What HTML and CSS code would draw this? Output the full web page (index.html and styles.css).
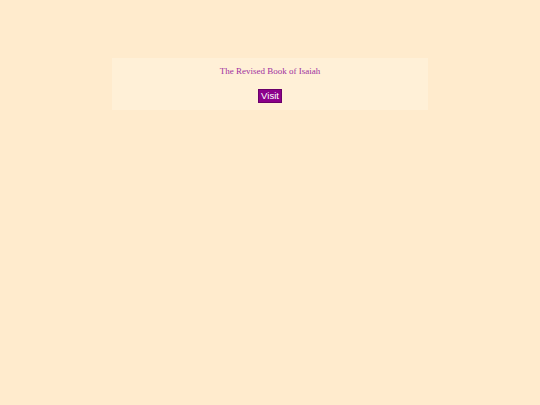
FILE: index.html
```html
<!DOCTYPE html>
<html>
<head>
<meta charset="utf-8">
<link rel="stylesheet" href="styles.css">
</head>
<body>
<div class="card">
  <p class="title">The Revised Book of Isaiah</p>
  <button class="visit">Visit</button>
</div>
</body>
</html>
```
FILE: styles.css
```css
html, body {
  margin: 0;
  padding: 0;
  background: #FFEBCD;
  height: 100%;
}
body {
  padding-top: 58px;
  box-sizing: border-box;
}
.card {
  width: 316px;
  margin: 0 auto;
  background: #FFF0D7;
  padding-top: 7px;
  height: 52px;
  box-sizing: border-box;
  text-align: center;
  font-family: "Liberation Serif", serif;
}
.title {
  margin: 0;
  color: #A0309F;
  font-size: 9px;
  line-height: 12px;
}
.visit {
  display: block;
  width: 24px;
  margin: 12px auto 0;
  background: #8B008B;
  color: #fff;
  border: 1px solid #6a006a;
  font-family: "Liberation Sans", sans-serif;
  font-size: 9.5px;
  line-height: 12px;
  padding: 0;
  height: 14px;
  box-sizing: border-box;
}
```
